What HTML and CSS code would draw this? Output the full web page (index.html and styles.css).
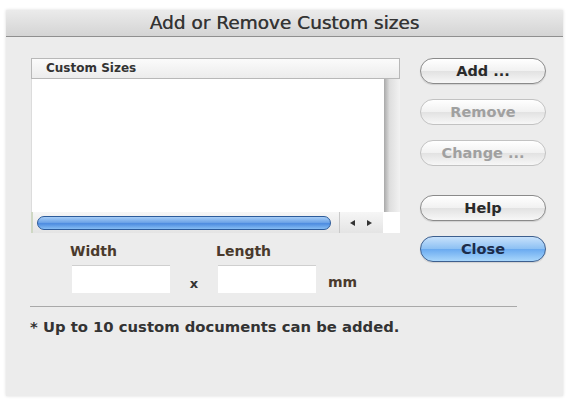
FILE: index.html
```html
<!DOCTYPE html>
<html>
<head>
<meta charset="utf-8">
<link rel="stylesheet" href="styles.css">
</head>
<body>
<div class="window">
  <div class="titlebar">Add or Remove Custom sizes</div>
  <div class="content">
    <div class="main">
      <div class="list">
        <div class="list-header">Custom Sizes</div>
        <div class="list-body">
          <div class="list-rows"></div>
          <div class="vscroll"></div>
        </div>
        <div class="hscroll">
          <div class="track">
            <div class="thumb"></div>
          </div>
          <div class="arrows">
            <span class="arrow arrow-left"></span>
            <span class="arrow arrow-right"></span>
          </div>
          <div class="corner"></div>
        </div>
      </div>
      <div class="fields">
        <div class="field">
          <label class="field-label">Width</label>
          <div class="input"></div>
        </div>
        <span class="times">x</span>
        <div class="field">
          <label class="field-label">Length</label>
          <div class="input"></div>
        </div>
        <span class="unit">mm</span>
      </div>
    </div>
    <div class="buttons">
      <button class="btn">Add ...</button>
      <button class="btn disabled">Remove</button>
      <button class="btn disabled">Change ...</button>
      <button class="btn help">Help</button>
      <button class="btn primary">Close</button>
    </div>
  </div>
  <div class="separator"></div>
  <p class="note">* Up to 10 custom documents can be added.</p>
</div>
</body>
</html>
```

FILE: styles.css
```css
html, body {
  margin: 0;
  padding: 0;
  background: #ffffff;
}

body {
  width: 570px;
  height: 401px;
  overflow: hidden;
  font-family: "DejaVu Sans", "Liberation Sans", sans-serif;
  color: #2a2a2a;
}

.window {
  margin: 10px 7px 0 6px;
  height: 386px;
  background: #ececec;
  box-shadow: 0 0 3px rgba(0, 0, 0, 0.15);
}

.titlebar {
  height: 26px;
  line-height: 25px;
  text-align: center;
  font-size: 18.5px;
  color: #333;
  text-shadow: 0.4px 0 0 #555;
  background: linear-gradient(#ebebeb, #d4d4d4);
  border-bottom: 1px solid #8f8f8f;
  border-top-left-radius: 3px;
  border-top-right-radius: 3px;
}

.content {
  display: flex;
  padding: 21px 0 0 25px;
}

.main {
  width: 369px;
}

.list {
  width: 369px;
}

.list-header {
  height: 19px;
  line-height: 19px;
  padding-left: 14px;
  font-size: 12px;
  font-weight: bold;
  color: #333;
  background: linear-gradient(#fbfbfb, #ececec);
  border: 1px solid #b8b8b8;
}

.list-body {
  display: flex;
  height: 133px;
}

.list-rows {
  flex: 1;
  background: #ffffff;
  border-left: 1px solid #dcdcdc;
}

.vscroll {
  width: 16px;
  background: linear-gradient(90deg, #a9a9a9, #dedede 35%, #f2f2f2);
}

.hscroll {
  display: flex;
  align-items: center;
  height: 21px;
  background: linear-gradient(#f6f6f6, #e4e4e4);
}

.track {
  width: 308px;
  height: 21px;
  display: flex;
  align-items: center;
  padding-left: 4px;
  box-sizing: border-box;
  border-left: 2px solid #cfd8c4;
}

.thumb {
  width: 294px;
  height: 14px;
  border-radius: 8px;
  border: 1px solid #2c5b9a;
  background: linear-gradient(#a7cdf6, #6fa5e8 45%, #4d8ce0 55%, #86bdf4);
  box-sizing: border-box;
}

.arrows {
  display: flex;
  align-items: center;
  gap: 12px;
  padding-left: 10px;
  width: 44px;
  box-sizing: border-box;
  border-left: 1px solid #c9c9c9;
  height: 21px;
}

.arrow {
  width: 0;
  height: 0;
  border-top: 3px solid transparent;
  border-bottom: 3px solid transparent;
}

.arrow-left {
  border-right: 5px solid #333;
}

.arrow-right {
  border-left: 5px solid #333;
}

.corner {
  flex: 1;
  height: 21px;
  background: #ffffff;
}

.fields {
  display: flex;
  align-items: flex-end;
  padding: 10px 0 0 41px;
}

.field {
  display: flex;
  flex-direction: column;
}

.field-label {
  font-size: 14px;
  font-weight: bold;
  color: #4a3a2c;
  margin-bottom: 6px;
  margin-left: -2px;
}

.input {
  width: 98px;
  height: 28px;
  background: #ffffff;
  border-top: 1px solid #cfcfcf;
  box-sizing: border-box;
}

.times {
  width: 48px;
  text-align: center;
  font-size: 13px;
  font-weight: bold;
  color: #333;
  padding-bottom: 2px;
}

.unit {
  padding-left: 12px;
  font-size: 14px;
  font-weight: bold;
  color: #4a3a2c;
  padding-bottom: 3px;
}

.buttons {
  display: flex;
  flex-direction: column;
  margin-left: 20px;
}

.btn {
  width: 126px;
  height: 26px;
  margin-bottom: 15px;
  border-radius: 13px;
  border: 1px solid #8a8a8a;
  background: linear-gradient(#ffffff, #f1f1f1 50%, #e2e2e2 51%, #f7f7f7);
  font-family: "DejaVu Sans", "Liberation Sans", sans-serif;
  font-size: 14.5px;
  font-weight: bold;
  color: #2a2a2a;
  padding: 0;
  box-shadow: 0 1px 1px rgba(0, 0, 0, 0.12);
}

.btn.disabled {
  color: #a0a0a0;
  border-color: #c2c2c2;
  box-shadow: none;
}

.btn.help {
  margin-top: 14px;
}

.btn.primary {
  border-color: #3d5f8e;
  color: #1c2c4a;
  background: linear-gradient(#c7e1fb, #8cc0f3 50%, #6aaaf0 51%, #a8d6fb);
}

.separator {
  margin: 13px 46px 0 24px;
  border-top: 1px solid #a9a9a9;
}

.note {
  margin: 11px 0 0 24px;
  font-size: 14.8px;
  font-weight: bold;
  color: #333;
}
```
